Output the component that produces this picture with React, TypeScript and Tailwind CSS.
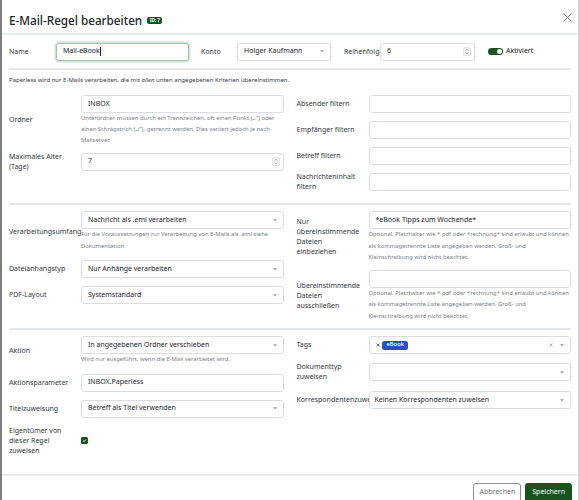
import React from 'react';

type Lines = string | string[];

function Label({ text, w = 'w-[72px]', className = '' }: { text: Lines; w?: string; className?: string }) {
  const lines = Array.isArray(text) ? text : [text];
  return (
    <div className={`${w} shrink-0 whitespace-nowrap text-[7px] leading-[10px] text-[#343a40] ${className}`}>
      {lines.map((l, i) => (
        <div key={i}>{l}</div>
      ))}
    </div>
  );
}

function Caret() {
  return (
    <svg width="4" height="3" viewBox="0 0 4 3" className="ml-auto shrink-0">
      <path d="M0 0.3 L4 0.3 L2 2.6 Z" fill="#9aa0a6" />
    </svg>
  );
}

function Spinner() {
  return (
    <svg width="8" height="9" viewBox="0 0 8 9" className="ml-auto shrink-0">
      <rect x="0.5" y="0.5" width="7" height="8" rx="1.5" fill="#f1f3f5" stroke="#d5d9dd" strokeWidth="0.6" />
      <path d="M2.5 3.6 L4 2.2 L5.5 3.6" fill="none" stroke="#8a9096" strokeWidth="0.6" />
      <path d="M2.5 5.4 L4 6.8 L5.5 5.4" fill="none" stroke="#8a9096" strokeWidth="0.6" />
    </svg>
  );
}

function Box({ children, className = '' }: { children?: React.ReactNode; className?: string }) {
  return (
    <div
      className={`relative flex h-[18px] items-center rounded-[3px] border border-[#dadee3] bg-white px-[6px] text-[7px] text-[#212529] ${className}`}
    >
      {children}
    </div>
  );
}

function Help({ children }: { children: React.ReactNode }) {
  return <div className="whitespace-nowrap text-[5.85px] leading-[11.5px] text-[#7a8087]">{children}</div>;
}

function Row({
  label,
  children,
  className = 'mb-[8px]',
  labelClass = '',
}: {
  label: Lines;
  children: React.ReactNode;
  className?: string;
  labelClass?: string;
}) {
  return (
    <div className={`flex items-center ${className}`}>
      <Label text={label} className={labelClass} />
      <div className="min-w-0 flex-1">{children}</div>
    </div>
  );
}

function Divider() {
  return <div className="h-[2px] bg-[#e6e9ec]" />;
}

function Cross({ size, color }: { size: number; color: string }) {
  return (
    <svg width={size} height={size} viewBox="0 0 4 4" className="shrink-0">
      <path d="M0.5 0.5 L3.5 3.5 M3.5 0.5 L0.5 3.5" stroke={color} strokeWidth="0.7" />
    </svg>
  );
}

const fileHelp = (
  <Help>
    Optional. Platzhalter wie *.pdf oder *rechnung* sind erlaubt und können
    <br />
    als kommagetrennte Liste angegeben werden. Groß- und
    <br />
    Kleinschreibung wird nicht beachtet.
  </Help>
);

export default function App() {
  return (
    <div className="flex h-[500px] w-[580px] overflow-hidden bg-white font-['Noto_Sans',sans-serif]">
      <div className="w-[2px] shrink-0 bg-[#7d7d7d]" />
      <div className="min-w-0 flex-1">
        {/* header */}
        <div className="flex h-[33px] items-center pl-[7px] pr-[6px] pt-[6px]">
          <h1 className="text-[11.7px] font-medium leading-[16px] text-[#212529]">E-Mail-Regel bearbeiten</h1>
          <span className="ml-[5px] mt-[1px] flex h-[7px] items-center rounded-[2px] bg-[#17541f] px-[2.5px] text-[4.5px] font-bold leading-none text-white">
            ID: 7
          </span>
          <svg width="9" height="9" viewBox="0 0 9 9" className="-mt-[4px] ml-auto">
            <path d="M0.5 0.5 L8.5 8.5 M8.5 0.5 L0.5 8.5" stroke="#6c757d" strokeWidth="0.9" />
          </svg>
        </div>
        <div className="h-[2px] bg-[#e9ecef]" />

        <div className="px-[7px]">
          {/* top row */}
          <div className="flex items-center py-[7.5px]">
            <Label text="Name" w="w-[47px]" />
            <div className="relative flex h-[18px] w-[133px] shrink-0 items-center rounded-[3px] border border-[#a9c4ab] bg-white px-[6px] text-[7px] text-[#212529] shadow-[0_0_0_1.5px_rgba(23,84,31,0.18)]">
              Mail-eBook
              <span className="ml-[0.5px] inline-block h-[9px] w-[0.8px] bg-[#212529]" />
            </div>
            <Label text="Konto" w="w-[36px]" className="ml-[12px]" />
            <Box className="w-[94px] shrink-0">
              Holger Kaufmann
              <Caret />
            </Box>
            <Label text="Reihenfolge" w="w-[36px]" className="ml-[13px] overflow-hidden" />
            <Box className="w-[95px] shrink-0 pr-[3px]">
              6
              <Spinner />
            </Box>
            <div className="ml-[13px] flex items-center">
              <div className="flex h-[7.5px] w-[15px] items-center justify-end rounded-full bg-[#17541f] pr-[1.2px]">
                <div className="h-[5px] w-[5px] rounded-full bg-white" />
              </div>
              <span className="ml-[3px] text-[7px] text-[#212529]">Aktiviert</span>
            </div>
          </div>
          <Divider />

          {/* section 1 */}
          <div className="pb-[11px] pt-[4.5px]">
            <div className="mb-[9px] text-[6px] leading-[11.5px] text-[#343a40]">
              Paperless wird nur E-Mails verarbeiten, die mit <em>allen</em> unten angegebenen Kriterien übereinstimmen.
            </div>
            <div className="grid grid-cols-2 gap-x-[13px]">
              <div>
                <Row label="Ordner" className="mb-[6px]">
                  <Box>INBOX</Box>
                  <div className="-mt-[0.5px] whitespace-nowrap text-[5.85px] leading-[11px] text-[#7a8087]">
                    Unterordner müssen durch ein Trennzeichen, oft einen Punkt („.“) oder
                    <br />
                    einen Schrägstrich („/“), getrennt werden. Dies variiert jedoch je nach
                    <br />
                    Mailserver.
                  </div>
                </Row>
                <Row label={['Maximales Alter', '(Tage)']} className="">
                  <Box className="pr-[3px]">
                    7
                    <Spinner />
                  </Box>
                </Row>
              </div>
              <div>
                <Row label="Absender filtern">
                  <Box />
                </Row>
                <Row label="Empfänger filtern">
                  <Box />
                </Row>
                <Row label="Betreff filtern" className="mb-[7px]">
                  <Box />
                </Row>
                <Row label={['Nachrichteninhalt', 'filtern']} className="">
                  <Box />
                </Row>
              </div>
            </div>
          </div>
          <Divider />

          {/* section 2 */}
          <div className="grid grid-cols-2 gap-x-[13px] pb-[6px] pt-[6px]">
            <div>
              <Row label="Verarbeitungsumfang">
                <Box>
                  Nachricht als .eml verarbeiten
                  <Caret />
                </Box>
                <Help>
                  Für die Voraussetzungen zur Verarbeitung von E-Mails als .eml siehe
                  <br />
                  Dokumentation
                </Help>
              </Row>
              <Row label="Dateianhangstyp">
                <Box>
                  Nur Anhänge verarbeiten
                  <Caret />
                </Box>
              </Row>
              <Row label="PDF-Layout" className="">
                <Box>
                  Systemstandard
                  <Caret />
                </Box>
              </Row>
            </div>
            <div>
              <Row label={['Nur', 'übereinstimmende', 'Dateien', 'einbeziehen']} className="mb-[6px]">
                <Box>*eBook Tipps zum Wochende*</Box>
                {fileHelp}
              </Row>
              <Row label={['Übereinstimmende', 'Dateien', 'ausschließen']} className="">
                <Box />
                {fileHelp}
              </Row>
            </div>
          </div>
          <Divider />

          {/* section 3 */}
          <div className="grid h-[144px] grid-cols-2 gap-x-[13px] pt-[6px]">
            <div>
              <Row label="Aktion">
                <Box>
                  In angegebenen Ordner verschieben
                  <Caret />
                </Box>
                <Help>Wird nur ausgeführt, wenn die E-Mail verarbeitet wird.</Help>
              </Row>
              <Row label="Aktionsparameter">
                <Box>INBOX.Paperless</Box>
              </Row>
              <Row label="Titelzuweisung">
                <Box>
                  Betreff als Titel verwenden
                  <Caret />
                </Box>
              </Row>
              <Row label={['Eigentümer von', 'dieser Regel', 'zuweisen']} className="">
                <div className="flex h-[7px] w-[7px] items-center justify-center rounded-[1.5px] bg-[#17541f]">
                  <svg width="5" height="5" viewBox="0 0 5 5">
                    <path d="M1 2.6 L2.1 3.6 L4 1.4" fill="none" stroke="white" strokeWidth="0.9" />
                  </svg>
                </div>
              </Row>
            </div>
            <div>
              <Row label="Tags">
                <Box className="pl-[6px] pr-[6px]">
                  <Cross size={4} color="#343a40" />
                  <span className="ml-[2.5px] flex h-[9px] items-center rounded-[2.5px] bg-[#2c4fb9] px-[4.5px] text-[5.8px] font-medium leading-none text-white">
                    eBook
                  </span>
                  <span className="ml-auto flex items-center gap-[7px]">
                    <Cross size={4} color="#9aa0a6" />
                    <Caret />
                  </span>
                </Box>
              </Row>
              <Row label={['Dokumenttyp', 'zuweisen']} className="mb-[9px]">
                <Box>
                  <Caret />
                </Box>
              </Row>
              <Row label="Korrespondentenzuweisung" className="" labelClass="overflow-hidden">
                <Box className="pl-[5px]">
                  Keinen Korrespondenten zuweisen
                  <Caret />
                </Box>
              </Row>
            </div>
          </div>
        </div>

        {/* footer */}
        <div className="h-[2px] bg-[#e9ecef]" />
        <div className="flex justify-end gap-[4px] pr-[6px] pt-[7px]">
          <button className="h-[19px] rounded-[3px] border border-[#8a9096] px-[5px] text-[7px] text-[#6c757d]">
            Abbrechen
          </button>
          <button className="h-[19px] rounded-[3px] bg-[#17541f] px-[7px] text-[7px] text-white">Speichern</button>
        </div>
      </div>
      <div className="w-[2px] shrink-0 bg-[#d4d4d4]" />
    </div>
  );
}
